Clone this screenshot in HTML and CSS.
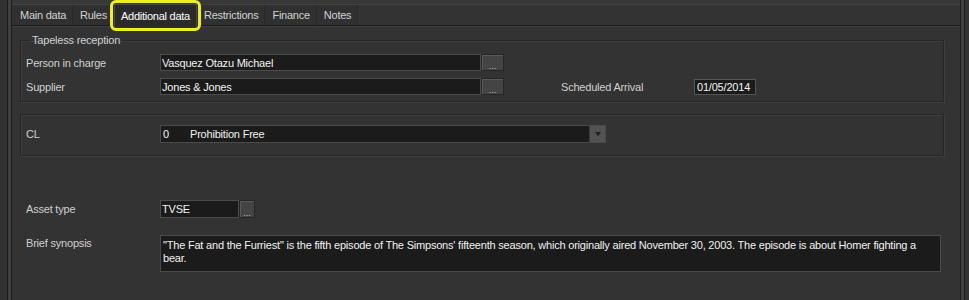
FILE: index.html
```html
<!DOCTYPE html>
<html lang="en">
<head>
  <meta charset="UTF-8" />
  <title>Additional data</title>
  <link rel="stylesheet" href="styles.css">
</head>
<body>

  <div class="window">
    <div class="inner">

      <!-- Tabs -->
      <div class="tabs">
        <div class="tab">Main data</div>
        <div class="tab">Rules</div>
        <div class="tab active">Additional data</div>
        <div class="tab">Restrictions</div>
        <div class="tab">Finance</div>
        <div class="tab">Notes</div>
      </div>

      <div class="panel">

        <fieldset class="group group-tapeless">
          <legend>Tapeless reception</legend>
          <div class="row">
            <label class="lbl">Person in charge</label>
            <input class="field field-wide" type="text" value="Vasquez Otazu Michael" readonly />
            <button class="dots">...</button>
          </div>
          <div class="row">
            <label class="lbl">Supplier</label>
            <input class="field field-wide" type="text" value="Jones &amp; Jones" readonly />
            <button class="dots">...</button>
            <label class="lbl lbl-arrival">Scheduled Arrival</label>
            <input class="field field-date" type="text" value="01/05/2014" readonly />
          </div>
        </fieldset>

        <div class="group group-cl">
          <div class="row">
            <label class="lbl">CL</label>
            <div class="combo">
              <span class="combo-code">0</span>
              <span class="combo-text">Prohibition Free</span>
              <span class="combo-arrow"></span>
            </div>
          </div>
        </div>

        <div class="row row-asset">
          <label class="lbl">Asset type</label>
          <input class="field field-asset" type="text" value="TVSE" readonly />
          <button class="dots dots-tall">...</button>
        </div>

        <div class="row row-synopsis">
          <label class="lbl">Brief synopsis</label>
          <div class="synopsis">"The Fat and the Furriest" is the fifth episode of The Simpsons' fifteenth season, which originally aired November 30, 2003. The episode is about Homer fighting a bear.</div>
        </div>

      </div>
    </div>
  </div>

</body>
</html>
```

FILE: styles.css
```css
body {
  margin: 0;
  height: 300px;
  overflow: hidden;
  background: #333333;
  font-family: "Liberation Sans", Arial, sans-serif;
  font-size: 11px;
  letter-spacing: -0.2px;
  color: #d0d0d0;
}
.window {
  height: 300px;
  margin: 0 4px 0 7px;
  padding: 0 3px;
  background: #404040;
  border-left: 1px solid #1c1c1c;
  border-right: 1px solid #1c1c1c;
}
.inner {
  height: 300px;
  background: #333333;
  border-left: 1px solid #1c1c1c;
  border-right: 1px solid #1c1c1c;
  box-shadow: inset 0 4px 0 #383838, inset 0 5px 0 #424242;
}

/* tabs */
.tabs {
  display: flex;
  height: 20px;
  padding: 5px 0 0 2px;
  border-bottom: 1px solid #1a1a1a;
  box-shadow: 0 1px 0 #3f3f3f;
}
.tab {
  position: relative;
  padding: 0 6px 0 7px;
  line-height: 20px;
  letter-spacing: -0.25px;
  color: #d2d2d2;
  background: #303030;
  border-right: 1px solid #2a2a2a;
}
.tab:first-child {
  padding-left: 6px;
}
.tab.active {
  margin: -1px 0 -2px;
  padding: 0 6px;
  line-height: 22px;
  color: #ffffff;
  background: #2a2a2a;
  border: 1px solid #4a4a4a;
  border-bottom: none;
  z-index: 1;
}
.tab.active::after {
  content: "";
  position: absolute;
  top: -5px;
  left: -5px;
  right: -5px;
  bottom: -4px;
  border: 3px solid #eef01e;
  border-radius: 6px;
}

/* content */
.panel {
  padding: 8px 16px 0 8px;
}
.group {
  margin: 0;
  border: 1px solid #262626;
  box-shadow: 1px 1px 0 #3f3f3f, inset 1px 1px 0 #3f3f3f;
}
.group-tapeless {
  padding: 8px 5px 6px;
}
.group-tapeless legend {
  margin-left: 4px;
  padding: 0 2px;
  color: #d0d0d0;
}
.group-tapeless .row + .row {
  margin-top: 7px;
}
.group-cl {
  margin-top: 12px;
  padding: 10px 5px 12px;
}
.row {
  display: flex;
  align-items: center;
}
.lbl {
  width: 134px;
  flex: none;
}
.lbl-arrival {
  width: 133px;
  margin-left: 57px;
}
.field {
  box-sizing: border-box;
  height: 17px;
  padding: 0 1px;
  margin: 0;
  border: 1px solid #4c4c4c;
  background: #1b1b1b;
  color: #f2f2f2;
  font-family: inherit;
  font-size: 11px;
  letter-spacing: -0.2px;
  outline: none;
}
.field-wide {
  width: 321px;
}
.field-date {
  width: 62px;
  height: 16px;
  padding: 0 2px;
  border-color: #555555;
}
.field-asset {
  width: 79px;
  height: 18px;
}
.dots {
  box-sizing: border-box;
  width: 23px;
  height: 17px;
  margin: 0;
  padding: 6px 0 0;
  border: 1px solid #262626;
  box-shadow: inset 1px 1px 0 #5a5a5a;
  background: #444444;
  color: #c4c4c4;
  font-family: inherit;
  font-size: 9px;
  line-height: 8px;
}
.dots-tall {
  width: 16px;
  height: 18px;
  padding-top: 7px;
}

/* combo */
.combo {
  position: relative;
  box-sizing: border-box;
  width: 446px;
  height: 18px;
  display: flex;
  align-items: center;
  border: 1px solid #4a4a4a;
  background: #1b1b1b;
  color: #f2f2f2;
}
.combo-code {
  width: 27px;
  padding-left: 2px;
}
.combo-arrow {
  margin-left: auto;
  width: 15px;
  height: 16px;
  background: #525252;
  border-left: 1px solid #3a3a3a;
  display: flex;
  align-items: center;
  justify-content: center;
}
.combo-arrow::before {
  content: "";
  border-left: 3px solid transparent;
  border-right: 3px solid transparent;
  border-top: 4px solid #1e1e1e;
}

.row-asset {
  margin-top: 44px;
  padding-left: 6px;
}
.row-synopsis {
  margin-top: 17px;
  padding-left: 6px;
  align-items: flex-start;
}
.row-synopsis .lbl {
  padding-top: 2px;
}
.synopsis {
  box-sizing: border-box;
  width: 781px;
  height: 37px;
  padding: 3px 2px;
  border: 1px solid #4a4a4a;
  background: #1b1b1b;
  color: #f2f2f2;
  line-height: 13px;
  overflow: hidden;
}
```
